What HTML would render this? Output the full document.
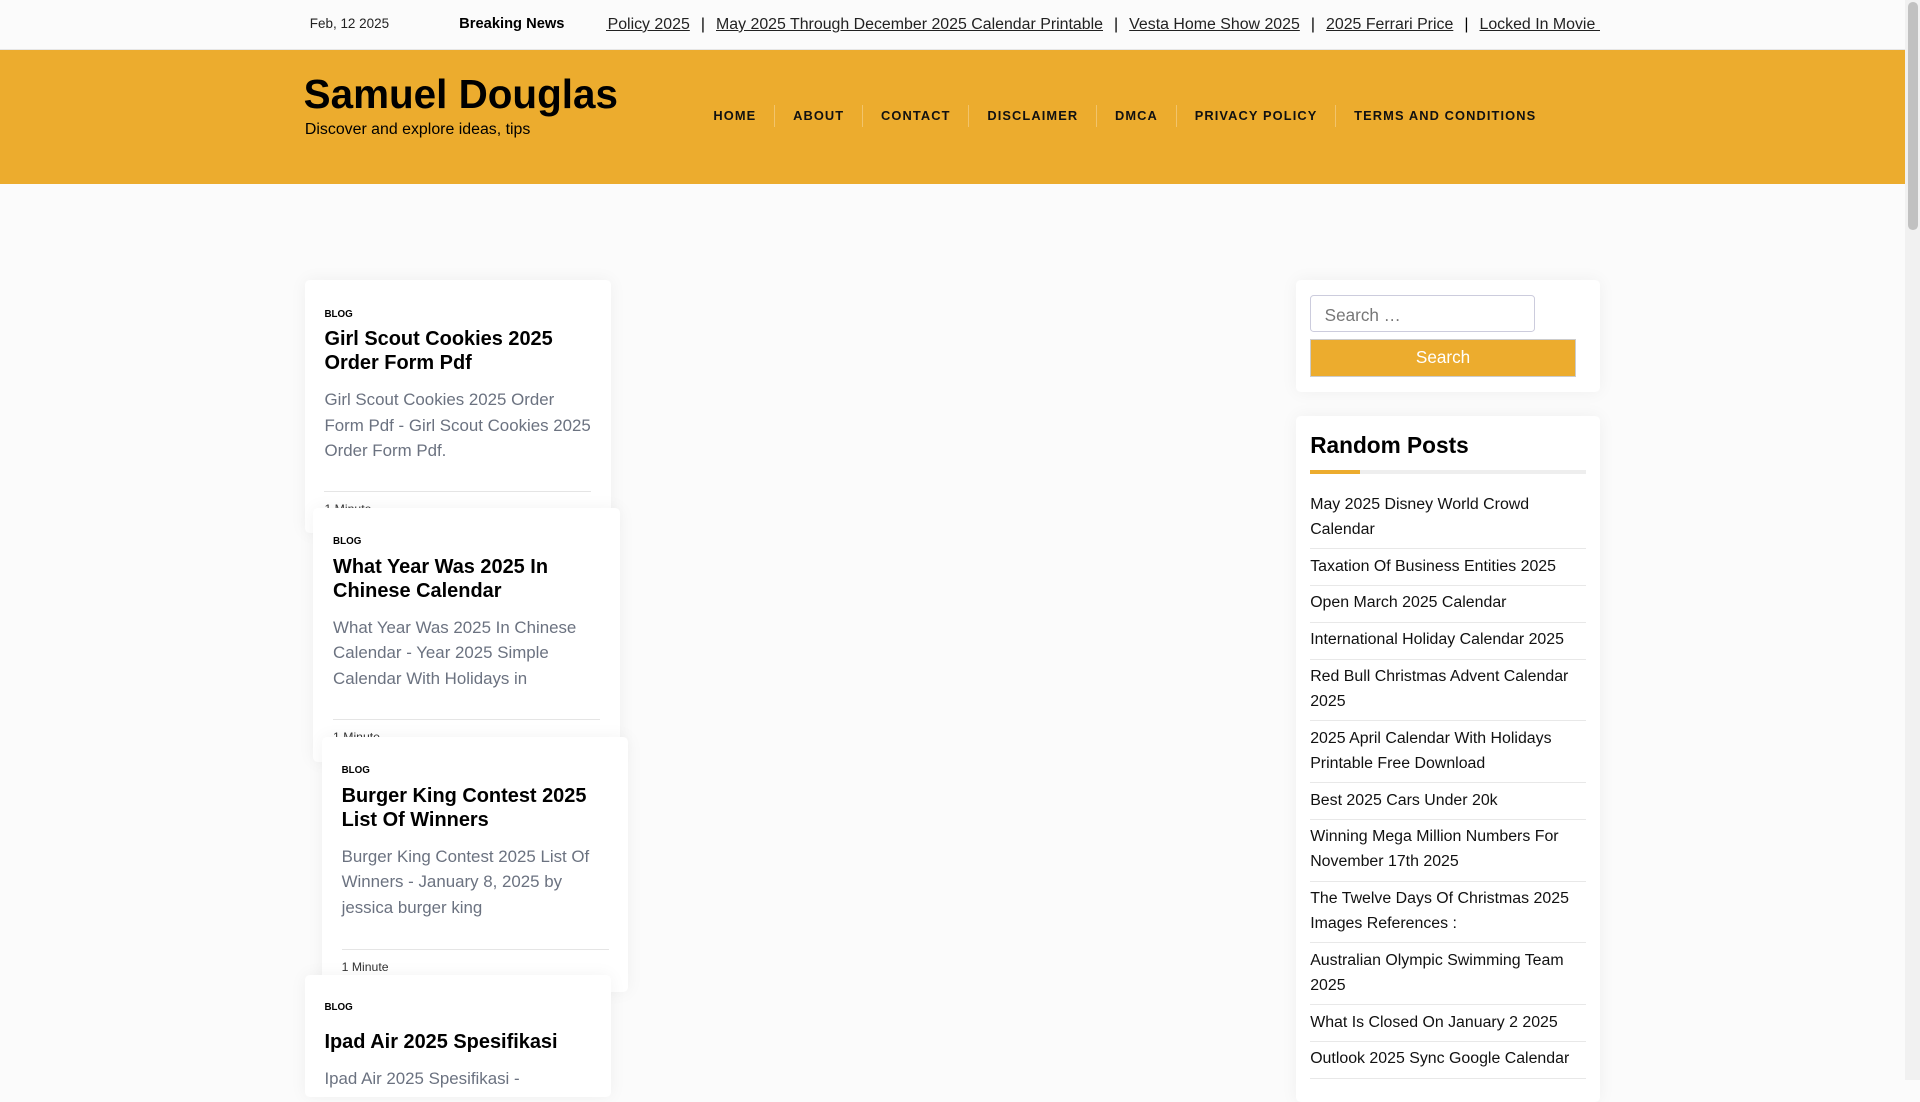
<!DOCTYPE html>
<html><head><meta charset="utf-8"><style>
html{zoom:1.22449}
body{margin:0;width:1568px;height:882px;overflow:hidden;background:#fbfbfb;font-family:"Liberation Sans",Arial,sans-serif;position:relative;color:#000}
.top{position:absolute;left:0;top:0;width:1556px;height:40px;background:#fbfbfb;border-bottom:1px solid #e6e6e6}
.top .date{position:absolute;left:253px;top:13px;font-size:11px;color:#222}
.top .bn{position:absolute;left:375px;top:13px;font-size:12px;font-weight:bold}
.ticker{position:absolute;left:495px;top:13px;width:812px;overflow:hidden;white-space:nowrap;font-size:13px}
.ticker a{color:#222;text-decoration:underline}
.ticker span{margin:0 9px}
.hdr{position:absolute;left:0;top:41px;width:1556px;height:109px;background:#ecac2e}
.logo{position:absolute;left:248px;top:17px;font-size:33px;font-weight:bold}
.tag{position:absolute;left:249px;top:58px;font-size:13px}
.nav{position:absolute;left:568px;top:45px;display:flex}
.nav div{font-size:10.5px;font-weight:bold;letter-spacing:.9px;padding:0 14.6px;border-left:1px solid #f2c46b;line-height:18px;color:#111}
.nav div:first-child{border:none}
.card{position:absolute;width:250px;background:#fff;border-radius:4px;box-shadow:0 0 14px rgba(0,0,0,.05);box-sizing:border-box;padding:0 12px 0 16px}
.card .c{font-size:8px;font-weight:bold;margin-top:23px}
.card h2{font-size:16.3px;line-height:20px;margin:6px 0 0}
.card p{font-size:13.8px;line-height:21px;color:#6b7280;margin:9px 0 0}
.card .m{border-top:1px solid #e5e5e5;position:absolute;left:16px;right:16px;top:172px;font-size:10px;padding-top:8px;color:#333}
.sb{position:absolute;left:1058px;width:249px;background:#fff;border-radius:4px;box-shadow:0 0 14px rgba(0,0,0,.05);box-sizing:border-box;padding:0 12px}
.inp{position:absolute;left:12px;top:12px;width:184px;height:30px;border:1px solid #ccd;border-radius:3px;box-sizing:border-box;font-size:14px;color:#777;padding:7px 11px}
.btn{position:absolute;left:12px;top:48px;width:217px;height:31px;background:#ecac2e;border:1px solid #ccc;box-sizing:border-box;color:#fff;font-size:14px;text-align:center;line-height:29px}
.sb h3{font-size:18.5px;margin:13px 0 0}
.bar{height:3px;background:#eee;margin-top:9px;position:relative}
.bar:before{content:"";position:absolute;left:0;top:0;width:41px;height:3px;background:#ecac2e}
.li{font-size:13px;line-height:20.3px;padding:4.5px 0;border-bottom:1px solid #e8e8e8;color:#111}
.scroll{position:absolute;left:1556px;top:0;width:12px;height:882px;background:#f1f1f1}
.scroll:after{content:"";position:absolute;left:2px;top:2px;width:8px;height:186px;background:#c1c1c1;border-radius:4px}
</style></head><body>
<div class="top"><div class="date">Feb, 12 2025</div><div class="bn">Breaking News</div>
<div class="ticker"><a style="margin-left:-45px">Privacy Policy 2025</a><span>|</span><a>May 2025 Through December 2025 Calendar Printable</a><span>|</span><a>Vesta Home Show 2025</a><span>|</span><a>2025 Ferrari Price</a><span>|</span><a>Locked In Movie 2025</a></div></div>
<div class="hdr"><div class="logo">Samuel Douglas</div><div class="tag">Discover and explore ideas, tips</div>
<div class="nav"><div>HOME</div><div>ABOUT</div><div>CONTACT</div><div>DISCLAIMER</div><div>DMCA</div><div>PRIVACY POLICY</div><div>TERMS AND CONDITIONS</div></div></div>

<div class="card" style="left:249px;top:229px;height:206px"><div class="c">BLOG</div><h2>Girl Scout Cookies 2025 Order Form Pdf</h2><p>Girl Scout Cookies 2025 Order Form Pdf - Girl Scout Cookies 2025 Order Form Pdf.</p><div class="m">1 Minute</div></div>
<div class="card" style="left:256px;top:415px;height:207px"><div class="c">BLOG</div><h2>What Year Was 2025 In Chinese Calendar</h2><p>What Year Was 2025 In Chinese Calendar - Year 2025 Simple Calendar With Holidays in</p><div class="m">1 Minute</div></div>
<div class="card" style="left:263px;top:602px;height:208px"><div class="c">BLOG</div><h2>Burger King Contest 2025 List Of Winners</h2><p>Burger King Contest 2025 List Of Winners - January 8, 2025 by jessica burger king</p><div class="m" style="top:173px">1 Minute</div></div>
<div class="card" style="left:249px;top:796px;height:100px"><div class="c" style="margin-top:22px">BLOG</div><h2 style="margin-top:14px">Ipad Air 2025 Spesifikasi</h2><p style="margin-top:10px">Ipad Air 2025 Spesifikasi -</p></div>

<div class="sb" style="top:229px;height:91px"><div class="inp">Search …</div><div class="btn">Search</div></div>
<div class="sb" style="top:340px;height:560px"><h3>Random Posts</h3><div class="bar"></div>
<div style="margin-top:11px">
<div class="li">May 2025 Disney World Crowd Calendar</div>
<div class="li">Taxation Of Business Entities 2025</div>
<div class="li">Open March 2025 Calendar</div>
<div class="li">International Holiday Calendar 2025</div>
<div class="li">Red Bull Christmas Advent Calendar 2025</div>
<div class="li">2025 April Calendar With Holidays Printable Free Download</div>
<div class="li">Best 2025 Cars Under 20k</div>
<div class="li">Winning Mega Million Numbers For November 17th 2025</div>
<div class="li">The Twelve Days Of Christmas 2025 Images References :</div>
<div class="li">Australian Olympic Swimming Team 2025</div>
<div class="li">What Is Closed On January 2 2025</div>
<div class="li">Outlook 2025 Sync Google Calendar</div>
</div></div>
<div class="scroll"></div>
</body></html>
